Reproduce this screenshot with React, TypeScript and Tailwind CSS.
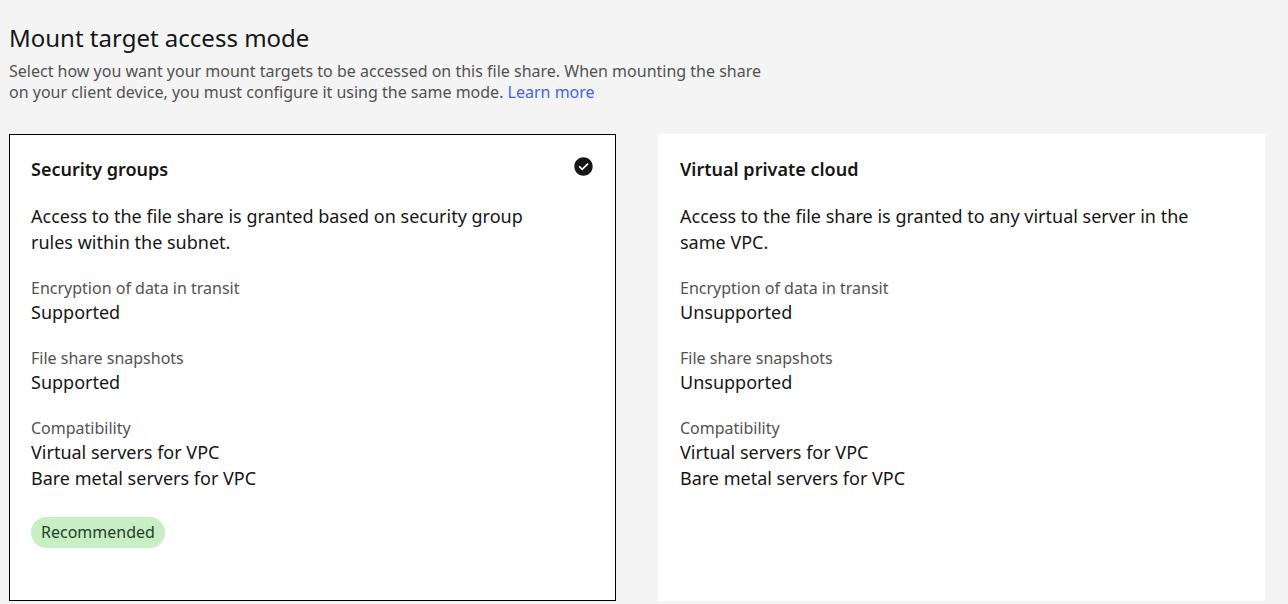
import { useState } from "react";

type Mode = {
  id: string;
  title: string;
  description: string;
  details: { label: string; values: string[] }[];
  recommended?: boolean;
};

const modes: Mode[] = [
  {
    id: "security-groups",
    title: "Security groups",
    description: "Access to the file share is granted based on security group rules within the subnet.",
    details: [
      { label: "Encryption of data in transit", values: ["Supported"] },
      { label: "File share snapshots", values: ["Supported"] },
      { label: "Compatibility", values: ["Virtual servers for VPC", "Bare metal servers for VPC"] },
    ],
    recommended: true,
  },
  {
    id: "vpc",
    title: "Virtual private cloud",
    description: "Access to the file share is granted to any virtual server in the same VPC.",
    details: [
      { label: "Encryption of data in transit", values: ["Unsupported"] },
      { label: "File share snapshots", values: ["Unsupported"] },
      { label: "Compatibility", values: ["Virtual servers for VPC", "Bare metal servers for VPC"] },
    ],
  },
];

function CheckmarkFilled() {
  return (
    <svg viewBox="0 0 16 16" className="size-[21px] shrink-0" aria-hidden="true">
      <path
        fill="#161616"
        d="M8 1C4.1 1 1 4.1 1 8s3.1 7 7 7 7-3.1 7-7-3.1-7-7-7zM7 11L4.3 8.3l.9-.8L7 9.3l4-3.9.9.8L7 11z"
      />
    </svg>
  );
}

function ModeTile({ mode, selected, onSelect }: { mode: Mode; selected: boolean; onSelect: () => void }) {
  return (
    <label
      htmlFor={mode.id}
      className={`relative block cursor-pointer border bg-white px-[21px] pt-[21px] pb-[52px] ${
        selected ? "border-black" : "border-white"
      }`}
    >
      <input
        id={mode.id}
        type="radio"
        name="access-mode"
        className="sr-only"
        checked={selected}
        onChange={onSelect}
      />
      <div className="flex items-start justify-between">
        <h3 className="text-[18px] leading-[26px] font-semibold">{mode.title}</h3>
        {selected && <CheckmarkFilled />}
      </div>
      <p className="mt-[21px] max-w-[520px]">{mode.description}</p>
      <dl className="mt-[23px] flex flex-col gap-[23px]">
        {mode.details.map((detail) => (
          <div key={detail.label}>
            <dt className="text-[16px] leading-[21px] text-[#525252]">{detail.label}</dt>
            {detail.values.map((value) => (
              <dd key={value}>{value}</dd>
            ))}
          </div>
        ))}
      </dl>
      {mode.recommended && (
        <span className="mt-[26px] flex h-[31px] w-fit items-center rounded-full bg-[#c8eec4] px-[10px] text-[16px] leading-[21px] text-[#23402b]">
          Recommended
        </span>
      )}
    </label>
  );
}

export default function App() {
  const [selected, setSelected] = useState("security-groups");

  return (
    <main className="min-h-screen bg-[#f4f4f4] pt-[21px] pr-[23px] pb-[3px] pl-[9px] font-['Noto_Sans',sans-serif] text-[18px] leading-[26px] text-[#161616]">
      <h2 id="mode-heading" className="text-[24px] leading-[34px]">
        Mount target access mode
      </h2>
      <p className="mt-[6px] max-w-[765px] text-[16px] leading-[21px] text-[#525252]">
        Select how you want your mount targets to be accessed on this file share. When mounting the share
        <br />
        on your client device, you must configure it using the same mode.{" "}
        <a href="#learn-more" className="inline-block text-[#4464e8]">
          Learn more
        </a>
      </p>
      <div
        role="radiogroup"
        aria-labelledby="mode-heading"
        className="mt-[31px] grid grid-cols-2 gap-[42px]"
      >
        {modes.map((mode) => (
          <ModeTile
            key={mode.id}
            mode={mode}
            selected={mode.id === selected}
            onSelect={() => setSelected(mode.id)}
          />
        ))}
      </div>
    </main>
  );
}
